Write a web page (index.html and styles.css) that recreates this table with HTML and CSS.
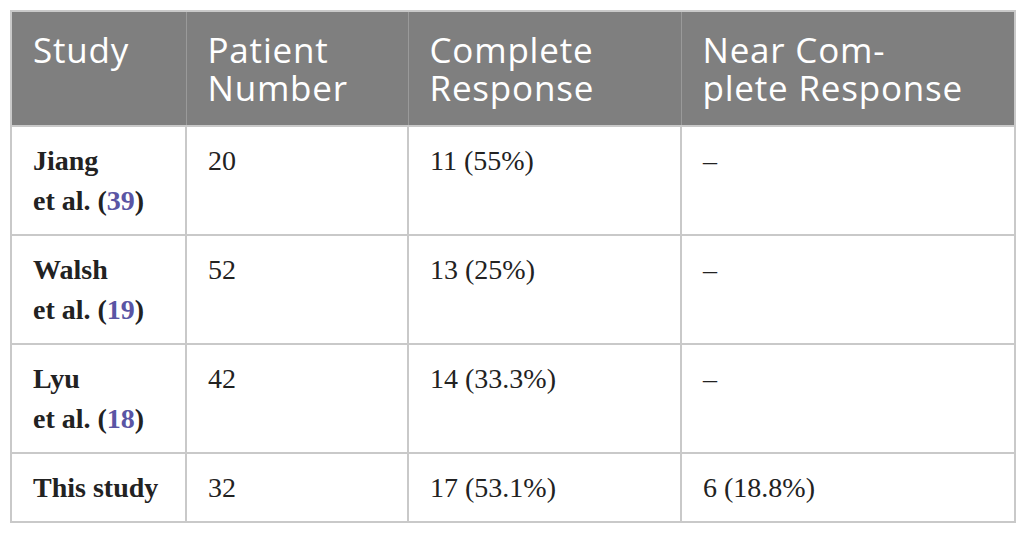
FILE: index.html
```html
<!DOCTYPE html>
<html>
<head>
<meta charset="utf-8">
<link rel="stylesheet" href="styles.css">
</head>
<body>
<table class="data">
  <colgroup>
    <col class="c1"><col class="c2"><col class="c3"><col class="c4">
  </colgroup>
  <thead>
    <tr>
      <th>Study</th>
      <th>Patient Number</th>
      <th>Complete Response</th>
      <th>Near Com-<br>plete Response</th>
    </tr>
  </thead>
  <tbody>
    <tr>
      <td class="study">Jiang<br>et al. (<a class="ref">39</a>)</td>
      <td>20</td>
      <td>11 (55%)</td>
      <td>–</td>
    </tr>
    <tr>
      <td class="study">Walsh<br>et al. (<a class="ref">19</a>)</td>
      <td>52</td>
      <td>13 (25%)</td>
      <td>–</td>
    </tr>
    <tr>
      <td class="study">Lyu<br>et al. (<a class="ref">18</a>)</td>
      <td>42</td>
      <td>14 (33.3%)</td>
      <td>–</td>
    </tr>
    <tr>
      <td class="study">This study</td>
      <td>32</td>
      <td>17 (53.1%)</td>
      <td>6 (18.8%)</td>
    </tr>
  </tbody>
</table>
</body>
</html>
```
FILE: styles.css
```css
html, body {
  margin: 0;
  padding: 0;
  background: #ffffff;
}
body {
  padding: 10px 9px 0 10px;
}
.data {
  border-collapse: collapse;
  table-layout: fixed;
  width: 1006px;
  border: 2px solid #c9c9c9;
}
.c1 { width: 175px; }
.c2 { width: 222px; }
.c3 { width: 273px; }
.c4 { width: 334px; }
.data th {
  background: #7f7f7f;
  color: #ffffff;
  font-family: "Open Sans", "Noto Sans", sans-serif;
  font-weight: 400;
  font-size: 35px;
  letter-spacing: 0.8px;
  line-height: 38px;
  text-align: left;
  vertical-align: top;
  padding: 19px 8px 18px 21px;
  border: 1px solid #9a9a9a;
  border-top: 2px solid #c9c9c9;
}
.data td {
  font-family: "Liberation Serif", "Times New Roman", serif;
  font-size: 28px;
  line-height: 40px;
  color: #222222;
  text-align: left;
  vertical-align: top;
  padding: 14px 10px 13px 21px;
  border: 2px solid #c9c9c9;
}
.data td.study {
  font-weight: 700;
}
.ref {
  color: #5a55a4;
  text-decoration: none;
}
```
